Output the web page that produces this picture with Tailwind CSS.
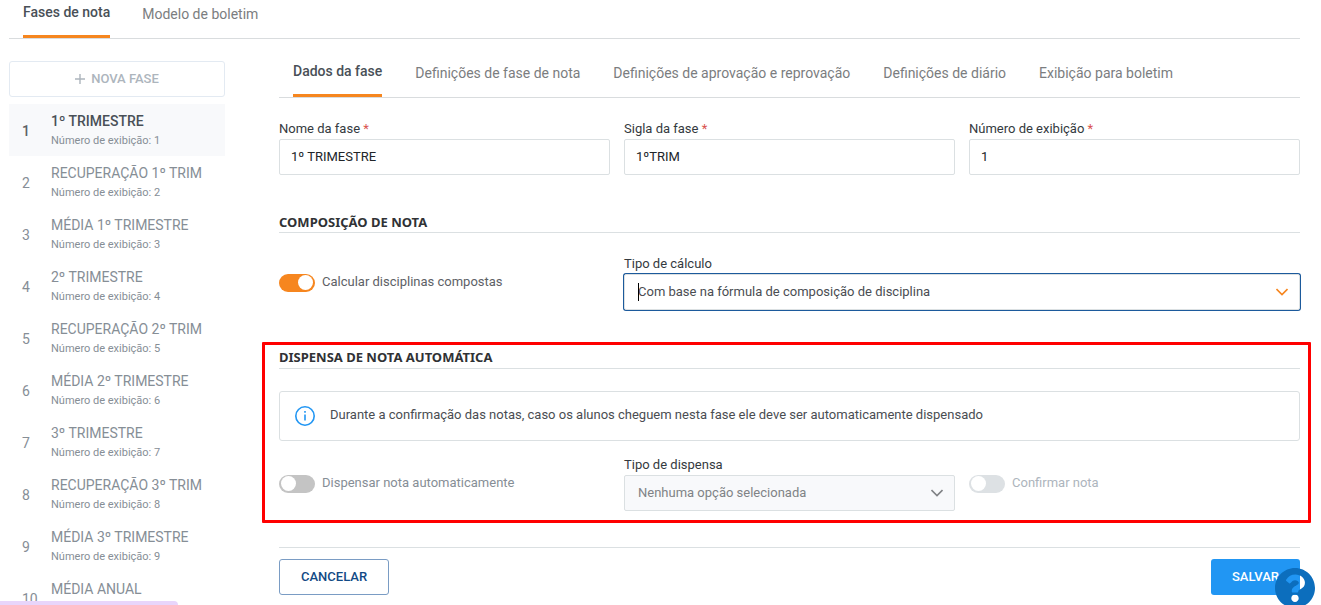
<!DOCTYPE html>
<html lang="pt-BR">
<head>
  <meta charset="UTF-8" />
  <meta name="viewport" content="width=device-width, initial-scale=1.0"/>
  <title>Fases de nota</title>
  <script src="https://cdn.jsdelivr.net/npm/@tailwindcss/browser@4"></script>
</head>
<body class="h-screen overflow-hidden bg-white font-['Roboto',sans-serif] text-[13px] text-[#4a4d52]">
  <div class="pl-[9px] pr-[21px]">

    <!-- Top tabs -->
    <nav class="flex h-[39px] gap-8 border-b border-[#d9dcde] pl-[14px] text-[14px]">
      <a href="#" class="border-b-3 border-[#f6861f] pt-[2px] leading-5 font-medium text-[#495057]">Fases de nota</a>
      <a href="#" class="pt-1 leading-5 text-[#7b7d80]">Modelo de boletim</a>
    </nav>

    <div class="flex gap-[54px]">

      <!-- Sidebar -->
      <aside class="w-[216px] shrink-0 pt-[22px]">
        <button class="flex h-9 w-full items-center justify-center gap-1.5 rounded-[3px] border border-[#e3eaf2] text-[13px] font-medium text-[#adb5bd]">
          <svg class="size-[10px]" viewBox="0 0 10 10" fill="none" stroke="#adb5bd" stroke-width="1.4"><path d="M5 0v10M0 5h10"/></svg>
          NOVA FASE
        </button>
        <ul class="mt-[7px] text-[#868e96]">
          <li class="flex h-[52px] items-center bg-[#f8f9fb] pt-[2px] pl-[13px]">
            <span class="w-[29px] shrink-0 text-[14px] font-medium text-[#5d6166]">1</span>
            <a href="#"><span class="block text-[14px] leading-5 font-medium text-[#495057]">1º TRIMESTRE</span><span class="block text-[11px] leading-5">Número de exibição: 1</span></a>
          </li>
          <li class="flex h-[52px] items-center pt-[2px] pl-[13px]">
            <span class="w-[29px] shrink-0 text-[14px]">2</span>
            <a href="#"><span class="block text-[14px] leading-5">RECUPERAÇÃO 1º TRIM</span><span class="block text-[11px] leading-5">Número de exibição: 2</span></a>
          </li>
          <li class="flex h-[52px] items-center pt-[2px] pl-[13px]">
            <span class="w-[29px] shrink-0 text-[14px]">3</span>
            <a href="#"><span class="block text-[14px] leading-5">MÉDIA 1º TRIMESTRE</span><span class="block text-[11px] leading-5">Número de exibição: 3</span></a>
          </li>
          <li class="flex h-[52px] items-center pt-[2px] pl-[13px]">
            <span class="w-[29px] shrink-0 text-[14px]">4</span>
            <a href="#"><span class="block text-[14px] leading-5">2º TRIMESTRE</span><span class="block text-[11px] leading-5">Número de exibição: 4</span></a>
          </li>
          <li class="flex h-[52px] items-center pt-[2px] pl-[13px]">
            <span class="w-[29px] shrink-0 text-[14px]">5</span>
            <a href="#"><span class="block text-[14px] leading-5">RECUPERAÇÃO 2º TRIM</span><span class="block text-[11px] leading-5">Número de exibição: 5</span></a>
          </li>
          <li class="flex h-[52px] items-center pt-[2px] pl-[13px]">
            <span class="w-[29px] shrink-0 text-[14px]">6</span>
            <a href="#"><span class="block text-[14px] leading-5">MÉDIA 2º TRIMESTRE</span><span class="block text-[11px] leading-5">Número de exibição: 6</span></a>
          </li>
          <li class="flex h-[52px] items-center pt-[2px] pl-[13px]">
            <span class="w-[29px] shrink-0 text-[14px]">7</span>
            <a href="#"><span class="block text-[14px] leading-5">3º TRIMESTRE</span><span class="block text-[11px] leading-5">Número de exibição: 7</span></a>
          </li>
          <li class="flex h-[52px] items-center pt-[2px] pl-[13px]">
            <span class="w-[29px] shrink-0 text-[14px]">8</span>
            <a href="#"><span class="block text-[14px] leading-5">RECUPERAÇÃO 3º TRIM</span><span class="block text-[11px] leading-5">Número de exibição: 8</span></a>
          </li>
          <li class="flex h-[52px] items-center pt-[2px] pl-[13px]">
            <span class="w-[29px] shrink-0 text-[14px]">9</span>
            <a href="#"><span class="block text-[14px] leading-5">MÉDIA 3º TRIMESTRE</span><span class="block text-[11px] leading-5">Número de exibição: 9</span></a>
          </li>
          <li class="flex h-[52px] items-center pt-[2px] pl-[13px]">
            <span class="w-[29px] shrink-0 text-[14px]">10</span>
            <a href="#"><span class="block text-[14px] leading-5">MÉDIA ANUAL</span><span class="block text-[11px] leading-5">Número de exibição: 10</span></a>
          </li>
        </ul>
      </aside>

      <!-- Form -->
      <main class="min-w-0 flex-1 pt-[22px]">
        <nav class="flex h-[37px] gap-[33px] border-b border-[#d9dcde] pl-[14px] text-[14px]">
          <a href="#" class="border-b-3 border-[#f6861f] leading-5 font-medium text-[#495057]">Dados da fase</a>
          <a href="#" class="pt-[2px] leading-5 text-[#7b7d80]">Definições de fase de nota</a>
          <a href="#" class="pt-[2px] leading-5 text-[#7b7d80]">Definições de aprovação e reprovação</a>
          <a href="#" class="pt-[2px] leading-5 text-[#7b7d80]">Definições de diário</a>
          <a href="#" class="pt-[2px] leading-5 text-[#7b7d80]">Exibição para boletim</a>
        </nav>

        <form>
          <div class="grid grid-cols-3 gap-[14px] pt-5">
            <div>
              <label for="nome" class="block leading-[21px] text-[#343a40]">Nome da fase <span class="text-[#d9534f]">*</span></label>
              <input id="nome" type="text" value="1º TRIMESTRE" class="block h-9 w-full rounded-[2px] border border-[#dbe0e2] px-[11px] pb-[2px] text-[#212529]">
            </div>
            <div>
              <label for="sigla" class="block leading-[21px] text-[#343a40]">Sigla da fase <span class="text-[#d9534f]">*</span></label>
              <input id="sigla" type="text" value="1ºTRIM" class="block h-9 w-full rounded-[2px] border border-[#dbe0e2] px-[11px] pb-[2px] text-[#212529]">
            </div>
            <div>
              <label for="numero" class="block leading-[21px] text-[#343a40]">Número de exibição <span class="text-[#d9534f]">*</span></label>
              <input id="numero" type="text" value="1" class="block h-9 w-full rounded-[2px] border border-[#dbe0e2] px-[11px] pb-[2px] text-[#212529]">
            </div>
          </div>

          <section class="mt-[37px]">
            <h2 class="border-b border-[#dbe0e2] font-['Noto_Sans',sans-serif] text-[13px] leading-5 font-bold text-[#303235]">COMPOSIÇÃO DE NOTA</h2>
            <div class="mt-5 grid grid-cols-3 gap-[14px]">
              <div class="flex items-start gap-[7px] pt-[21px]">
                <input id="compostas" type="checkbox" checked class="h-[18px] w-9 shrink-0 appearance-none rounded-full bg-[#c4c4c4] px-[2px] py-px before:block before:size-[15px] before:rounded-full before:bg-white checked:bg-[#f6861f] checked:before:ml-[17px]">
                <label for="compostas" class="leading-4 text-[#5d6166]">Calcular disciplinas compostas</label>
              </div>
              <div class="col-span-2">
                <label for="calculo" class="block leading-[21px] text-[#343a40]">Tipo de cálculo</label>
                <div class="relative">
                  <select id="calculo" class="block h-9 w-full appearance-none rounded-[2px] border border-[#dbe0e2] bg-white px-[13px] text-[#4a4d52] ring-1 ring-[#1c5a9c]">
                    <option>Com base na fórmula de composição de disciplina</option>
                  </select>
                  <!-- text cursor -->
                  <span class="absolute top-[9px] left-[14px] h-[18px] w-px bg-black"></span>
                  <svg class="pointer-events-none absolute top-[14px] right-3 h-2 w-3" viewBox="0 0 12 8" fill="none" stroke="#f6861f" stroke-width="1.6"><path d="M.5 1 6 6.5 11.5 1"/></svg>
                </div>
              </div>
            </div>
          </section>

          <section class="relative mt-[38px]">
            <!-- Highlight frame -->
            <div class="pointer-events-none absolute -top-[6px] -right-[11px] -bottom-3 -left-[17px] rounded-[1px] border-3 border-[#ff0000]"></div>
            <h2 class="border-b border-[#dbe0e2] pb-[2px] font-['Noto_Sans',sans-serif] text-[13px] leading-[18px] font-bold text-[#303235]">DISPENSA DE NOTA AUTOMÁTICA</h2>
            <div class="mt-[22px] flex h-[50px] items-center gap-[15px] rounded-[3px] border border-[#dbe0e2] pl-[15px]">
              <svg class="size-5" viewBox="0 0 20 20" fill="none"><circle cx="10" cy="10" r="9.2" stroke="#2196f3" stroke-width="1.6"/><path d="M9.2 5h1.6v1.7H9.200zM9.200 8.500h1.600V14.500H9.200z" fill="#2196f3"/></svg>
              <p class="pb-[2px]">Durante a confirmação das notas, caso os alunos cheguem nesta fase ele deve ser automaticamente dispensado</p>
            </div>
            <div class="mt-[13px] grid grid-cols-3 gap-[14px]">
              <div class="flex items-start gap-[7px] pt-[21px]">
                <input id="dispensar" type="checkbox" class="h-[18px] w-9 shrink-0 appearance-none rounded-full bg-[#c4c4c4] px-[2px] py-px before:block before:size-[15px] before:rounded-full before:bg-white checked:bg-[#f6861f] checked:before:ml-[17px]">
                <label for="dispensar" class="leading-4 text-[#868e96]">Dispensar nota automaticamente</label>
              </div>
              <div>
                <label for="dispensa" class="block leading-[21px] text-[#343a40]">Tipo de dispensa</label>
                <div class="relative">
                  <select id="dispensa" disabled class="block h-9 w-full appearance-none rounded-[2px] border border-[#dbe0e2] bg-[#f8f9fb] px-[13px] text-[#808386] opacity-100">
                    <option>Nenhuma opção selecionada</option>
                  </select>
                  <svg class="pointer-events-none absolute top-[14px] right-3 h-2 w-3" viewBox="0 0 12 8" fill="none" stroke="#808386" stroke-width="1.6"><path d="M.5 1 6 6.5 11.5 1"/></svg>
                </div>
              </div>
              <div class="flex items-start gap-[7px] pt-[21px]">
                <input id="confirmar" type="checkbox" disabled class="h-[18px] w-9 shrink-0 appearance-none rounded-full bg-[#dde1e4] px-[2px] py-px before:block before:size-[15px] before:rounded-full before:bg-white">
                <label for="confirmar" class="leading-4 text-[#adb5bd]">Confirmar nota</label>
              </div>
            </div>
          </section>

          <footer class="mt-9 flex justify-between border-t border-[#dbe0e2] pt-[11px]">
            <button type="button" class="h-9 rounded-[3px] border border-[#7a9cc4] px-[21px] font-medium text-[#124a85]">CANCELAR</button>
            <button type="submit" class="h-9 rounded-[3px] bg-[#2196f3] px-[21px] font-medium text-white">SALVAR</button>
          </footer>
        </form>
      </main>
    </div>
  </div>

  <!-- Browser status bubble -->
  <div class="fixed bottom-0 left-0 h-1 w-[178px] rounded-tr-[4px] bg-[#e8d5fb]"></div>

  <!-- Help button, the question mark is cut out of the disc -->
  <button aria-label="Ajuda" class="fixed right-[6px] -bottom-[3px] size-10">
    <svg class="size-10" viewBox="8 8 496 496" fill="#0c6ebd"><path d="M504 256c0 137-111 248-248 248S8 393 8 256C8 119 119 8 256 8s248 111 248 248zM262.700 90c-54.500 0-89.300 23-116.500 63.800-3.500 5.300-2.400 12.400 2.700 16.300l34.700 26.300c5.200 3.900 12.600 3 16.700-2.100 17.900-22.700 30.100-35.800 57.300-35.800 20.400 0 45.700 13.100 45.700 33 0 15-12.400 22.700-32.500 34C247.100 238.500 216 254.900 216 296v4c0 6.600 5.400 12 12 12h56c6.600 0 12-5.400 12-12v-1.300c0-28.500 83.200-29.600 83.200-106.700 0-58-60.200-102-116.500-102zM256 338c-25.400 0-46 20.600-46 46 0 25.400 20.600 46 46 46s46-20.600 46-46c0-25.400-20.600-46-46-46z"/></svg>
  </button>
</body>
</html>
